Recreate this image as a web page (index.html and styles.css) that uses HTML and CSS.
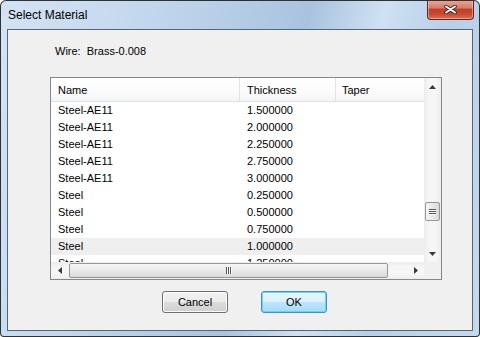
FILE: index.html
```html
<!DOCTYPE html>
<html lang="en">
<head>
	<meta charset="UTF-8">
	<title>Select Material</title>
	<link rel="stylesheet" href="styles.css">
</head>
<body>
	<div class="window">
		<div class="titlebar">
			<span class="title">Select Material</span>
			<span class="close">
				<svg width="13" height="9" viewBox="0 0 13 9">
					<path d="M2 1.5 L11 7.5 M11 1.5 L2 7.5" stroke="#3b1e1a" stroke-width="3.6" stroke-linecap="round"/>
					<path d="M2 1.5 L11 7.5 M11 1.5 L2 7.5" stroke="#fff" stroke-width="2" stroke-linecap="round"/>
				</svg>
			</span>
		</div>
		<div class="client">
			<div class="wire">Wire:&nbsp; Brass-0.008</div>
			<div class="listview">
				<div class="list-main">
					<div class="header">
						<span class="c-name">Name</span>
						<span class="c-thick">Thickness</span>
						<span class="c-taper">Taper</span>
					</div>
					<div class="rows">
						<div class="row"><span class="c-name">Steel-AE11</span><span class="c-thick">1.500000</span><span class="c-taper"></span></div>
						<div class="row"><span class="c-name">Steel-AE11</span><span class="c-thick">2.000000</span><span class="c-taper"></span></div>
						<div class="row"><span class="c-name">Steel-AE11</span><span class="c-thick">2.250000</span><span class="c-taper"></span></div>
						<div class="row"><span class="c-name">Steel-AE11</span><span class="c-thick">2.750000</span><span class="c-taper"></span></div>
						<div class="row"><span class="c-name">Steel-AE11</span><span class="c-thick">3.000000</span><span class="c-taper"></span></div>
						<div class="row"><span class="c-name">Steel</span><span class="c-thick">0.250000</span><span class="c-taper"></span></div>
						<div class="row"><span class="c-name">Steel</span><span class="c-thick">0.500000</span><span class="c-taper"></span></div>
						<div class="row"><span class="c-name">Steel</span><span class="c-thick">0.750000</span><span class="c-taper"></span></div>
						<div class="row hover"><span class="c-name">Steel</span><span class="c-thick">1.000000</span><span class="c-taper"></span></div>
						<div class="row"><span class="c-name">Steel</span><span class="c-thick">1.250000</span><span class="c-taper"></span></div>
					</div>
				</div>
				<div class="vscroll">
					<span class="arrow">
						<svg width="7" height="4" viewBox="0 0 7 4"><polygon points="0,4 3.5,0 7,4" fill="#3a3a3a"/></svg>
					</span>
					<div class="track">
						<div class="thumb">
							<span class="grip"></span><span class="grip"></span><span class="grip"></span>
						</div>
					</div>
					<span class="arrow">
						<svg width="7" height="4" viewBox="0 0 7 4"><polygon points="0,0 7,0 3.5,4" fill="#3a3a3a"/></svg>
					</span>
				</div>
				<div class="hscroll">
					<span class="arrow">
						<svg width="4" height="7" viewBox="0 0 4 7"><polygon points="4,0 4,7 0,3.5" fill="#3a3a3a"/></svg>
					</span>
					<div class="track">
						<div class="thumb">
							<span class="grip"></span><span class="grip"></span><span class="grip"></span>
						</div>
					</div>
					<span class="arrow">
						<svg width="4" height="7" viewBox="0 0 4 7"><polygon points="0,0 4,3.5 0,7" fill="#3a3a3a"/></svg>
					</span>
				</div>
				<div class="corner"></div>
			</div>
			<div class="buttons">
				<span class="btn">Cancel</span>
				<span class="btn default">OK</span>
			</div>
		</div>
	</div>
</body>
</html>
```

FILE: styles.css
```css
body{
	margin: 0;
	font-family: "Liberation Sans", Arial, sans-serif;
}
.window{
	box-sizing: border-box;
	width: 480px;
	height: 337px;
	border: 1px solid rgba(20,20,20,.85);
	border-radius: 6px 6px 4px 4px;
	background: linear-gradient(105deg, #d3e3f4 0%, #c4d8ed 25%, #a9c3df 55%, #cfe1f2 68%, #b7cfe8 80%, #c6daee 100%);
	overflow: hidden;
}
	.titlebar{
		display: flex;
		justify-content: space-between;
		align-items: flex-start;
		height: 28px;
		padding: 0 5px 0 7px;
	}
		.title{
			margin-top: 7px;
			font: 12px/14px "Liberation Sans", Arial, sans-serif;
			color: #000;
		}
		.close{
			display: flex;
			align-items: center;
			justify-content: center;
			box-sizing: border-box;
			width: 47px;
			height: 20px;
			margin-top: -1px;
			border: 1px solid #5b2b22;
			border-top: none;
			border-radius: 0 0 4px 4px;
			background: linear-gradient(#e8a898 0%, #d97e68 40%, #c23f28 50%, #c94a33 75%, #d8705a 100%);
			box-shadow: inset 0 0 0 1px rgba(255,210,200,.5);
		}
	.client{
		box-sizing: border-box;
		height: 302px;
		margin: 0 6px;
		padding: 15px 0 0 42px;
		border: 1px solid #55657a;
		background: #f0f0f0;
		font: 11px/13px "Liberation Sans", Arial, sans-serif;
		color: #000;
	}
		.wire{
			margin-left: 5px;
			height: 13px;
		}
		.listview{
			display: grid;
			grid-template-columns: 1fr 17px;
			grid-template-rows: 1fr 17px;
			box-sizing: border-box;
			width: 392px;
			height: 203px;
			margin-top: 19px;
			border: 1px solid #828790;
			background: #fff;
		}
			.list-main{
				overflow: hidden;
			}
				.header{
					display: flex;
					height: 23px;
					border-bottom: 1px solid #e0e2e5;
					background: linear-gradient(#fff, #fbfbfc 60%, #f3f4f6);
					line-height: 24px;
				}
				.header span{
					box-sizing: border-box;
					border-right: 1px solid #e3e4e6;
				}
				.c-name, .c-thick, .c-taper{
					box-sizing: border-box;
					padding-left: 7px;
					white-space: nowrap;
				}
				.c-name{ width: 189px; }
				.c-thick{ width: 96px; }
				.c-taper{ width: 88px; padding-left: 6px; }
				.header .c-taper{ border-right: none; }
				.row{
					display: flex;
					height: 17px;
					line-height: 17px;
				}
				.row.hover{
					background: #efefef;
				}
			.vscroll, .hscroll{
				display: flex;
				background: #f4f4f4;
			}
			.vscroll{
				flex-direction: column;
				background: linear-gradient(90deg, #ececec, #f6f6f6 30%, #f6f6f6 70%, #ededed);
			}
			.hscroll{
				background: linear-gradient(#ececec, #f6f6f6 30%, #f6f6f6 70%, #ededed);
			}
				.arrow{
					display: flex;
					align-items: center;
					justify-content: center;
					width: 17px;
					height: 17px;
					flex: none;
				}
				.track{
					flex: 1;
					display: flex;
				}
				.thumb{
					display: flex;
					align-items: center;
					justify-content: center;
					box-sizing: border-box;
					border: 1px solid #979797;
					border-radius: 2px;
				}
				.vscroll .track{
					flex-direction: column;
				}
				.vscroll .thumb{
					flex-direction: column;
					gap: 1px;
					width: 15px;
					height: 19px;
					margin: 107px 0 0 1px;
					background: linear-gradient(90deg, #f5f5f5, #e9e9e9 50%, #d9d9d9);
				}
					.vscroll .grip{
						width: 7px;
						height: 1px;
						background: #555;
						box-shadow: 0 1px 0 #fff;
					}
				.hscroll .thumb{
					gap: 1px;
					width: 319px;
					height: 15px;
					margin: 1px 0 0 1px;
					background: linear-gradient(#f5f5f5, #e9e9e9 50%, #d9d9d9);
				}
					.hscroll .grip{
						width: 1px;
						height: 7px;
						background: #555;
						box-shadow: 1px 0 0 #fff;
					}
			.corner{
				background: #f0f0f0;
			}
		.buttons{
			display: flex;
			gap: 33px;
			margin: 11px 0 0 112px;
		}
			.btn{
				box-sizing: border-box;
				width: 66px;
				height: 22px;
				line-height: 20px;
				text-align: center;
				border: 1px solid #707070;
				border-radius: 3px;
				background: linear-gradient(#f2f2f2 0%, #ebebeb 50%, #dddddd 51%, #cfcfcf 100%);
				box-shadow: inset 0 0 0 1px #fcfcfc;
			}
			.btn.default{
				border-color: #3c94c8;
				background: linear-gradient(#eaf6fd 0%, #d9f0fc 50%, #bee6fd 51%, #a7d9f5 100%);
				box-shadow: inset 0 0 0 1px #6fd0f5;
			}
```
